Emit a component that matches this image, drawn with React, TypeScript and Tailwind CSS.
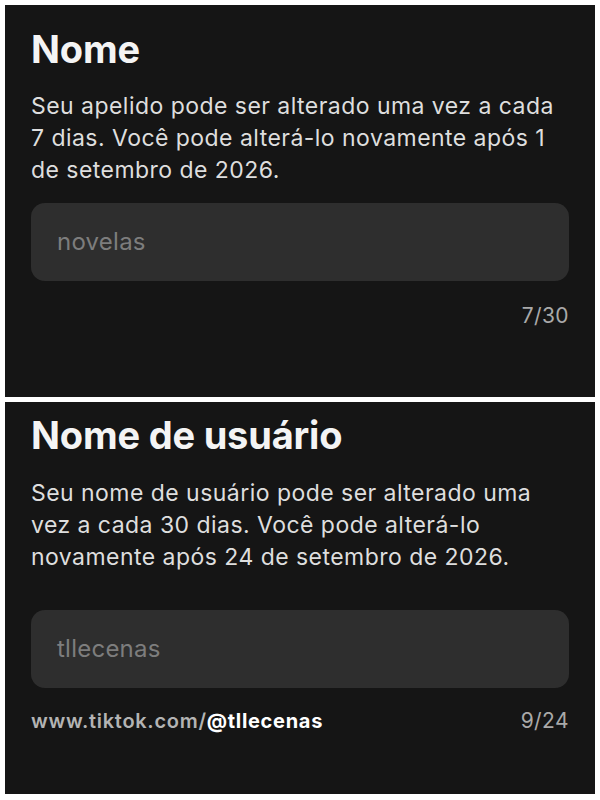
export default function App() {
  return (
    <div className="min-h-screen w-[600px] bg-white pt-[5px] font-['Inter',sans-serif]">
      {/* Nome */}
      <section className="mx-[5px] h-[392px] bg-[#151515] px-[26px] pt-[25px]">
        <h1 className="text-[38px] font-bold leading-none tracking-[-0.005em] text-[#f4f4f4]">Nome</h1>
        <p className="mt-[22px] text-[23px] leading-[32px] tracking-[0.02em] text-[#dedede]">
          Seu apelido pode ser alterado uma vez a cada 7 dias. Você pode alterá-lo novamente após 1 de setembro de
          2026.
        </p>
        <div className="mt-[17px] flex h-[78px] items-center rounded-[14px] bg-[#2e2e2e] px-[26px]">
          <span className="text-[24px] tracking-[0.01em] text-[#7d7d7d]">novelas</span>
        </div>
        <div className="mt-[23px] text-right text-[21px] leading-6 tracking-[0.02em] text-[#a9a9a9]">7/30</div>
      </section>

      {/* Nome de usuário */}
      <section className="mx-[5px] mt-[5px] h-[392px] bg-[#151515] px-[26px] pt-[14px]">
        <h1 className="text-[38px] font-bold leading-none tracking-[-0.005em] text-[#f4f4f4]">Nome de usuário</h1>
        <p className="mt-[23px] text-[23px] leading-[32px] tracking-[0.02em] text-[#dedede]">
          Seu nome de usuário pode ser alterado uma vez a cada 30 dias. Você pode alterá-lo novamente após 24 de
          setembro de 2026.
        </p>
        <div className="mt-[37px] flex h-[78px] items-center rounded-[14px] bg-[#2e2e2e] px-[26px]">
          <span className="text-[24px] tracking-[0.01em] text-[#7d7d7d]">tllecenas</span>
        </div>
        <div className="mt-[21px] flex items-center justify-between leading-6">
          <span className="text-[20px] font-semibold tracking-[0.035em] text-[#b3b3b3]">
            www.tiktok.com/<span className="font-bold text-white">@tllecenas</span>
          </span>
          <span className="text-[21px] tracking-[0.02em] text-[#a9a9a9]">9/24</span>
        </div>
      </section>
    </div>
  )
}
